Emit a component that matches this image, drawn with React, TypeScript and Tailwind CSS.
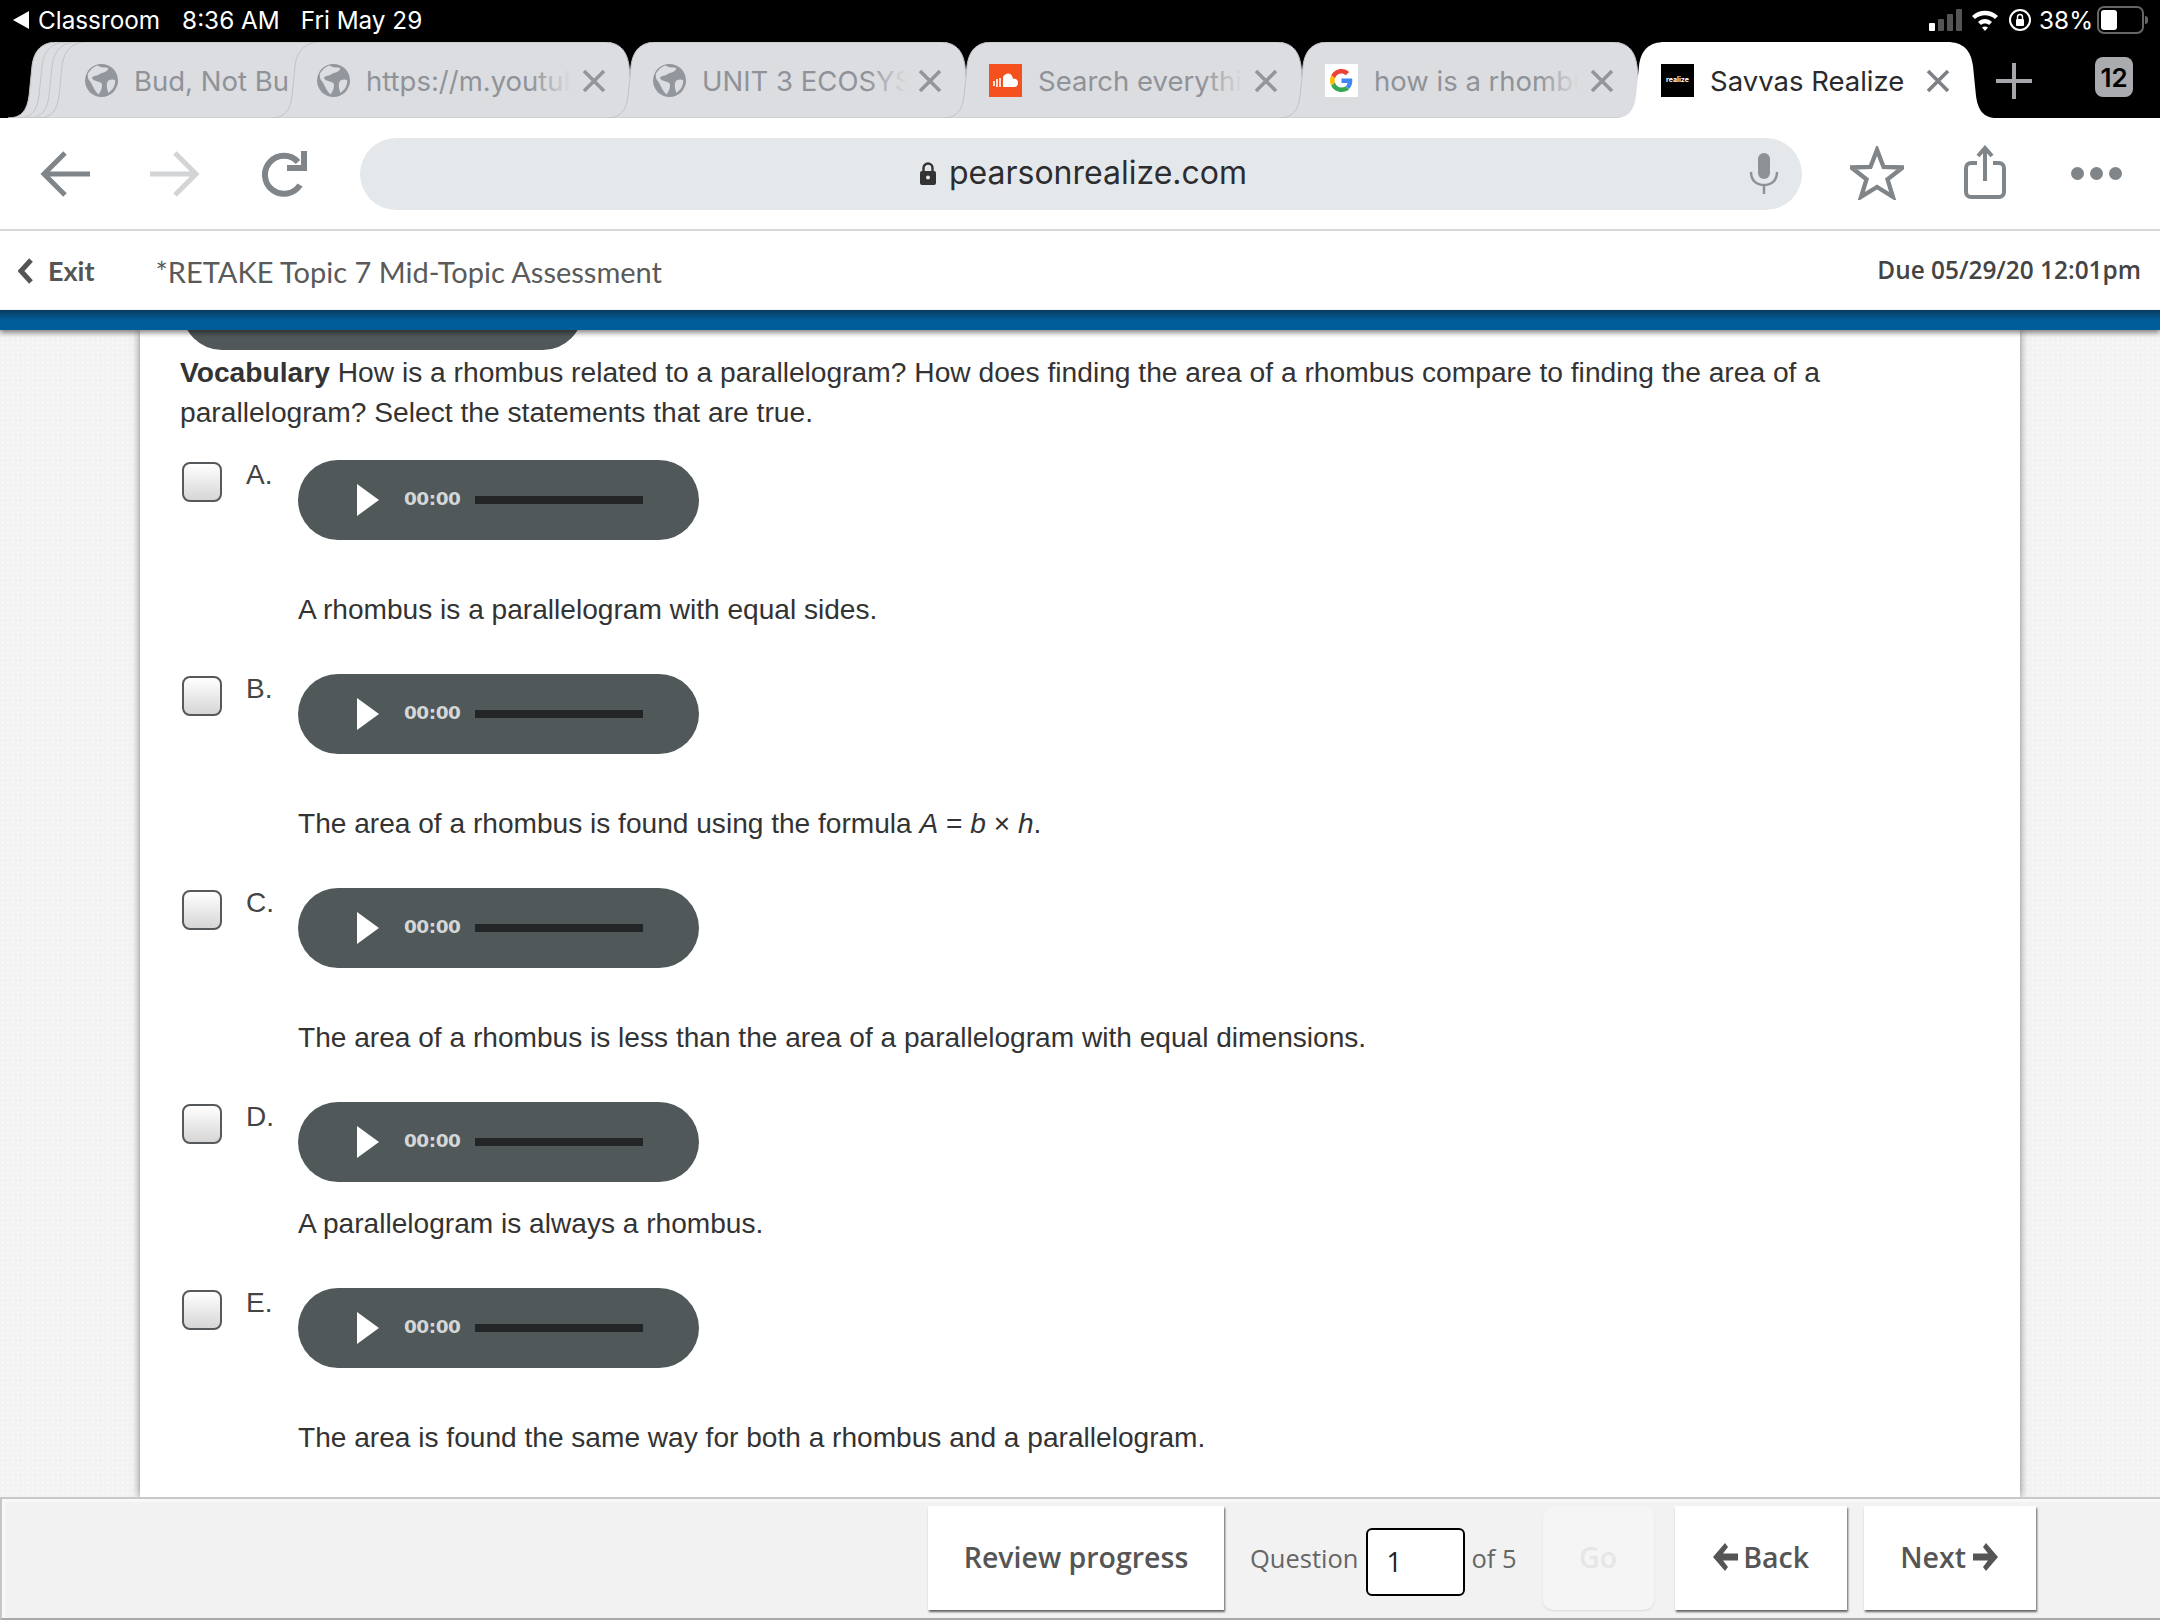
const tabPath =
  "M0 76 C14 76 19 68 21 54 L24 24 C26 8 34 0 50 0 L332 0 C348 0 356 8 358 24 L361 54 C363 68 368 76 382 76 Z";

function Globe() {
  return (
    <svg width="33" height="33" viewBox="0 0 24 24" className="shrink-0">
      <circle cx="12" cy="12" r="12" fill="#92979d" />
      <path
        d="M9 1 C12 3 15 2 17 3 C16 6 13 6 11 7 C9 9 6 8 5 10 C6 13 10 12 12 14 C13 16 12 19 10 22 C7 20 6 16 4 13 C2 11 2 9 2 7 C4 4 6 2 9 1 Z M17 12 C19 11 21 11 22 12 C22 16 20 19 17 21 C16 18 15 14 17 12 Z"
        fill="#dcdde0"
      />
    </svg>
  );
}

function SoundCloudIcon() {
  return (
    <div className="flex h-[33px] w-[33px] shrink-0 items-center justify-center bg-[#f4511e]">
      <svg width="27" height="16" viewBox="0 0 27 16">
        <path d="M11 15 V5 C13 1 18 0 20 4 C20.5 5 21 6 21 7 C24 6 26 8 26 11 C26 14 24 15 22 15 Z" fill="#fff" />
        <path d="M2 9v5M5 7v8M8 6v9" stroke="#fff" strokeWidth="1.6" />
      </svg>
    </div>
  );
}

function GoogleIcon() {
  return (
    <div className="flex h-[33px] w-[33px] shrink-0 items-center justify-center bg-white">
      <svg width="23" height="23" viewBox="0 0 48 48">
        <path fill="#EA4335" d="M24 9.5c3.5 0 6.6 1.2 9.1 3.6l6.8-6.8C35.8 2.4 30.4 0 24 0 14.6 0 6.5 5.4 2.6 13.2l7.9 6.1C12.4 13.7 17.7 9.5 24 9.5z" />
        <path fill="#4285F4" d="M46.5 24.5c0-1.6-.1-3.1-.4-4.5H24v9h12.7c-.6 2.9-2.2 5.4-4.7 7l7.6 5.9c4.4-4.1 6.9-10.1 6.9-17.4z" />
        <path fill="#FBBC05" d="M10.5 28.7c-.5-1.5-.8-3-.8-4.7s.3-3.2.8-4.7l-7.9-6.1C.9 16.5 0 20.1 0 24s.9 7.5 2.6 10.8l7.9-6.1z" />
        <path fill="#34A853" d="M24 48c6.5 0 11.9-2.1 15.9-5.8L32 36.3c-2.1 1.4-4.8 2.3-8 2.3-6.3 0-11.6-4.2-13.5-9.9l-7.9 6.1C6.5 42.6 14.6 48 24 48z" />
      </svg>
    </div>
  );
}

function RealizeIcon() {
  return (
    <div className="flex h-[33px] w-[33px] shrink-0 items-center justify-center bg-black text-[7px] font-bold text-white">
      realize
    </div>
  );
}

function CloseIcon({ active }: { active?: boolean }) {
  return (
    <svg width="24" height="24" viewBox="0 0 24 24" className="absolute left-[289px] top-[27px]">
      <path d="M2 2 L22 22 M22 2 L2 22" fill="none" stroke={active ? "#7d8084" : "#92969b"} strokeWidth="3.6" />
    </svg>
  );
}

function Tab({ icon, title, active }: { icon: React.ReactNode; title: string; active?: boolean }) {
  return (
    <div className="relative h-[76px] w-[336px] shrink-0">
      <svg viewBox="0 0 382 76" className="absolute -left-[22px] top-0 h-[76px] w-[382px]">
        <path d={tabPath} fill={active ? "#ffffff" : "#dcdde0"} stroke={active ? "none" : "#c2c3c7"} strokeWidth="1" />
      </svg>
      <div className="relative flex h-full items-center pl-[24px]">
        {icon}
        <div className="relative ml-[16px] w-[205px] overflow-hidden whitespace-nowrap pt-[2px]">
          <span className={`text-[27.5px] leading-[36px] ${active ? "text-[#2a2a2c]" : "text-[#8f9399]"}`}>{title}</span>
          {!active && (
            <div className="absolute right-0 top-0 h-full w-[40px] bg-gradient-to-r from-transparent to-[#dcdde0]" />
          )}
        </div>
        <CloseIcon active={active} />
      </div>
    </div>
  );
}

function TabStack() {
  return (
    <div className="relative h-[76px] w-[263px] shrink-0">
      <svg viewBox="0 0 310 76" className="absolute -left-[22px] top-0 h-[76px] w-[310px]">
        {[0, 10, 20, 30].map((dx) => (
          <path
            key={dx}
            d="M0 76 C14 76 19 68 21 54 L24 24 C26 8 34 0 50 0 L300 0 L300 76 Z"
            transform={`translate(${dx} 0)`}
            fill="#dcdde0"
            stroke="#c2c3c7"
            strokeWidth="1"
          />
        ))}
      </svg>
      <div className="relative flex h-full items-center pl-[55px]">
        <Globe />
        <div className="ml-[16px] w-[155px] overflow-hidden whitespace-nowrap pt-[2px] text-[27.5px] leading-[36px] text-[#8f9399]">
          Bud, Not Bud
        </div>
      </div>
    </div>
  );
}

function AudioBar() {
  return (
    <div className="flex h-[80px] w-[401px] shrink-0 items-center rounded-[40px] bg-[#50585a] pl-[59px]">
      <svg width="22" height="32" viewBox="0 0 22 32" className="shrink-0">
        <path d="M0 0 L22 16 L0 32 Z" fill="#ffffff" />
      </svg>
      <span className="mb-[2px] ml-[25px] font-['DejaVu_Sans'] text-[18.5px] font-bold leading-none tracking-[-0.5px] text-[#d4d6d7]">
        00:00
      </span>
      <div className="ml-[15px] h-[8px] w-[168px] bg-[#232526]" />
    </div>
  );
}

export default function App() {
  return (
    <div className="flex h-[1620px] w-[2160px] flex-col overflow-hidden bg-white font-['Liberation_Sans',sans-serif]">
      {/* status bar */}
      <div className="flex h-[42px] shrink-0 items-center bg-black pb-[2px] pl-[13px] pr-[11px] font-['Inter',sans-serif] text-[24.3px] text-white">
        <svg width="16" height="18" viewBox="0 0 16 18" className="mr-[9px]">
          <path d="M16 0 V18 L0 9 Z" fill="#fff" />
        </svg>
        <span>Classroom</span>
        <span className="ml-[22px]">8:36 AM</span>
        <span className="ml-[21px]">Fri May 29</span>
        <div className="ml-auto flex items-center">
          <svg width="33" height="22" viewBox="0 0 33 22">
            <rect x="0" y="14" width="6" height="8" rx="1" fill="#fff" />
            <rect x="9" y="10" width="6" height="12" rx="1" fill="#555" />
            <rect x="18" y="5" width="6" height="17" rx="1" fill="#555" />
            <rect x="27" y="0" width="6" height="22" rx="1" fill="#555" />
          </svg>
          <svg width="28" height="22" viewBox="0 0 28 22" className="ml-[9px]">
            <path d="M1 7 C8 0 20 0 27 7 L24 10 C18 5 10 5 4 10 Z M7 13 C11 9 17 9 21 13 L18 16 C16 14 12 14 10 16 Z M14 22 L11 18.5 C13 17 15 17 17 18.5 Z" fill="#fff" />
          </svg>
          <svg width="24" height="26" viewBox="0 0 24 26" className="ml-[9px]">
            <circle cx="12" cy="13" r="10" fill="none" stroke="#fff" strokeWidth="2" />
            <rect x="8" y="12" width="8" height="7" rx="1" fill="#fff" />
            <path d="M9.5 12 V10 a2.5 2.5 0 0 1 5 0 V12" fill="none" stroke="#fff" strokeWidth="1.4" />
          </svg>
          <span className="ml-[7px]">38%</span>
          <div className="relative ml-[4px] mr-[5px] flex h-[28px] w-[47px] items-center rounded-[7px] border-2 border-[#666] p-[2px]">
            <div className="h-full w-[16px] rounded-[3px] bg-white" />
            <div className="absolute -right-[6px] top-[8px] h-[8px] w-[3px] rounded-r bg-[#666]" />
          </div>
        </div>
      </div>

      {/* tabs */}
      <div className="flex h-[76px] shrink-0 items-start overflow-hidden bg-black pl-[30px] font-['Inter',sans-serif]">
        <TabStack />
        <Tab icon={<Globe />} title="https://m.youtube" />
        <Tab icon={<Globe />} title="UNIT 3 ECOSYSTEMS" />
        <Tab icon={<SoundCloudIcon />} title="Search everything" />
        <Tab icon={<GoogleIcon />} title="how is a rhombus" />
        <Tab icon={<RealizeIcon />} title="Savvas Realize" active />
        <div className="relative flex h-full flex-1 items-center">
          <svg width="36" height="36" viewBox="0 0 36 36" className="ml-[23px] mt-[2px] shrink-0">
            <path d="M18 0 V36 M0 18 H36" fill="none" stroke="#a5a7aa" strokeWidth="4" />
          </svg>
          <div className="-mt-[6px] ml-[63px] flex h-[40px] w-[38px] items-center justify-center rounded-[8px] bg-[#a9abae] text-[26px] font-semibold text-black">
            12
          </div>
        </div>
      </div>

      {/* toolbar */}
      <div className="flex h-[113px] shrink-0 items-center border-b-2 border-[#d8d8d8] bg-white pl-[40px]">
        <svg width="50" height="46" viewBox="0 0 50 46" className="shrink-0">
          <path d="M50 23 H4 M25 2 L4 23 L25 44" fill="none" stroke="#7f8589" strokeWidth="5" />
        </svg>
        <svg width="50" height="46" viewBox="0 0 50 46" className="ml-[60px] shrink-0">
          <path d="M0 23 H46 M25 2 L46 23 L25 44" fill="none" stroke="#d2d4d6" strokeWidth="5" />
        </svg>
        <svg width="46" height="46" viewBox="0 0 46 46" className="ml-[62px] shrink-0">
          <path d="M36 11 A19 19 0 1 0 38 34" fill="none" stroke="#7f8589" strokeWidth="6" />
          <path d="M42 0 V17 H25" fill="none" stroke="#7f8589" strokeWidth="6" />
        </svg>
        <div className="relative ml-[52px] flex h-[72px] w-[1442px] shrink-0 items-center justify-center rounded-[36px] bg-[#e5e8eb] pl-[4px]">
          <svg width="18" height="24" viewBox="0 0 18 24" className="mr-[12px]">
            <rect x="1" y="9" width="16" height="14" rx="2" fill="#333" />
            <path d="M4.5 9 V6 a4.5 4.5 0 0 1 9 0 V9" fill="none" stroke="#333" strokeWidth="2.4" />
            <circle cx="9" cy="15.5" r="2" fill="#e5e8eb" />
          </svg>
          <span className="mb-[2px] font-['Inter',sans-serif] text-[32px] leading-none text-[#2d2d2f]">pearsonrealize.com</span>
          <svg width="30" height="42" viewBox="0 0 30 42" className="absolute right-[23px] top-[15px]">
            <rect x="9" y="0" width="12" height="26" rx="6" fill="#8d9296" />
            <path d="M2 19 C2 28 8 32 15 32 C22 32 28 28 28 19 M15 32 V41" fill="none" stroke="#8d9296" strokeWidth="2.5" />
          </svg>
        </div>
        <svg width="54" height="54" viewBox="0 0 56 54" className="-mt-[2px] ml-[48px] shrink-0">
          <path
            d="M28 3 L34.8 20.7 L54.6 21.3 L38.9 33.6 L44.5 51.7 L28 41.5 L11.5 51.7 L17.1 33.6 L1.4 21.3 L21.2 20.7 Z"
            fill="none"
            stroke="#7f8589"
            strokeWidth="4.5"
          />
        </svg>
        <svg width="42" height="54" viewBox="0 0 42 54" className="-mt-[4px] ml-[60px] shrink-0">
          <path d="M13 18 H7 a5 5 0 0 0 -5 5 V47 a5 5 0 0 0 5 5 H35 a5 5 0 0 0 5 -5 V23 a5 5 0 0 0 -5 -5 H29" fill="none" stroke="#7f8589" strokeWidth="4" />
          <path d="M21 36 V4 M14 11 L21 3 L28 11" fill="none" stroke="#7f8589" strokeWidth="4" />
        </svg>
        <div className="ml-[65px] flex shrink-0 gap-[6px]">
          <div className="h-[13px] w-[13px] rounded-full bg-[#7f8589]" />
          <div className="h-[13px] w-[13px] rounded-full bg-[#7f8589]" />
          <div className="h-[13px] w-[13px] rounded-full bg-[#7f8589]" />
        </div>
      </div>

      {/* assessment header */}
      <div className="flex h-[79px] shrink-0 items-center bg-white pl-[18px] pr-[19px] font-['Lato',sans-serif] text-[#555]">
        <svg width="16" height="26" viewBox="0 0 16 26">
          <path d="M13 2 L3 13 L13 24" fill="none" stroke="#555" strokeWidth="5" />
        </svg>
        <span className="ml-[14px] mt-[2px] text-[27px] font-bold">Exit</span>
        <span className="ml-[61px] mt-[2px] text-[29px] text-[#5a5a5a]">*RETAKE Topic 7 Mid-Topic Assessment</span>
        <span className="ml-auto font-['Open_Sans',sans-serif] text-[24.4px] font-semibold text-[#444]">
          Due 05/29/20 12:01pm
        </span>
      </div>
      <div className="relative z-10 h-[20px] shrink-0 bg-gradient-to-b from-[#083c5e] to-[#015c9a] to-50% shadow-[0_3px_5px_rgba(0,0,0,0.45)]" />

      {/* content */}
      <div className="min-h-0 flex-1 overflow-hidden bg-[#f3f3f3] bg-[radial-gradient(#fafafa_1px,transparent_1px)] bg-[length:5px_5px]">
        <div className="ml-[140px] flow-root h-full w-[1880px] bg-white pl-[42px] pr-[180px] shadow-[0_0_8px_rgba(0,0,0,0.5)]">
          <div className="-mt-[60px]">
            <AudioBar />
          </div>
          <p className="-ml-[2px] mb-[28px] mt-[2px] text-[28.2px] leading-[40px] text-[#333]">
            <b>Vocabulary</b> How is a rhombus related to a parallelogram? How does finding the area of a rhombus
            compare to finding the area of a parallelogram? Select the statements that are true.
          </p>
          {choices.map((c) => (
            <div key={c.letter} className="mb-[44px] flex">
              <div className="mt-[2px] h-[40px] w-[40px] shrink-0 rounded-[8px] border-2 border-[#56595b] bg-gradient-to-b from-white to-[#d6d6d6]" />
              <div className="ml-[24px] w-[52px] shrink-0 text-[28px] leading-[30px] text-[#444]">{c.letter}</div>
              <div className="text-[28.1px] leading-[40px] text-[#333]">
                <AudioBar />
                <div className={c.letter === "D." ? "mt-[22px]" : "mt-[50px]"}>{c.text}</div>
              </div>
            </div>
          ))}
        </div>
      </div>

      {/* footer */}
      <div className="relative flex h-[123px] shrink-0 items-start border-b-2 border-l-2 border-t-2 border-b-[#a8a8a8] border-l-[#c6c6c6] border-t-[#c8c8c8] bg-[#f2f2f2] pt-[7px] font-['Open_Sans',sans-serif] shadow-[inset_3px_3px_0_#f8f8f8]">
        <button className="ml-[926px] h-[104px] w-[296px] bg-white pb-[2px] text-[28.5px] font-semibold text-[#555] shadow-[1px_2px_2px_rgba(0,0,0,0.6)]">
          Review progress
        </button>
        <span className="ml-[26px] mt-[33px] text-[25.5px] text-[#666]">Question</span>
        <div className="ml-[8px] mt-[22px] flex h-[68px] w-[99px] items-center rounded-[6px] border-2 border-black bg-white pl-[18px] text-[27px] text-[#222]">
          1
        </div>
        <span className="ml-[6px] mt-[33px] text-[25.5px] text-[#666]">of 5</span>
        <button className="ml-[26px] h-[104px] w-[111px] rounded-[10px] bg-[#f5f5f5] pb-[2px] text-[28.5px] font-semibold text-[#e6e6e6] shadow-[0_1px_2px_rgba(0,0,0,0.1)]">
          Go
        </button>
        <button className="ml-[21px] flex h-[104px] w-[172px] items-center justify-center bg-white pb-[2px] text-[28.5px] font-semibold text-[#555] shadow-[1px_2px_2px_rgba(0,0,0,0.6)]">
          <svg width="26" height="30" viewBox="0 0 26 30" className="mr-[5px]">
            <path d="M13 1 L1 15 L13 29 L16 25 L11 18.5 H26 V11.5 H11 L16 5 Z" fill="#555" />
          </svg>
          Back
        </button>
        <button className="ml-[17px] flex h-[104px] w-[172px] items-center justify-center bg-white pb-[2px] text-[28.5px] font-semibold text-[#555] shadow-[1px_2px_2px_rgba(0,0,0,0.6)]">
          Next
          <svg width="26" height="30" viewBox="0 0 26 30" className="ml-[7px]">
            <path d="M13 1 L25 15 L13 29 L10 25 L15 18.5 H0 V11.5 H15 L10 5 Z" fill="#555" />
          </svg>
        </button>
      </div>
    </div>
  );
}

const choices: { letter: string; text: React.ReactNode }[] = [
  { letter: "A.", text: "A rhombus is a parallelogram with equal sides." },
  {
    letter: "B.",
    text: (
      <>
        The area of a rhombus is found using the formula <i>A</i> = <i>b</i> × <i>h</i>.
      </>
    ),
  },
  { letter: "C.", text: "The area of a rhombus is less than the area of a parallelogram with equal dimensions." },
  { letter: "D.", text: "A parallelogram is always a rhombus." },
  { letter: "E.", text: "The area is found the same way for both a rhombus and a parallelogram." },
];
